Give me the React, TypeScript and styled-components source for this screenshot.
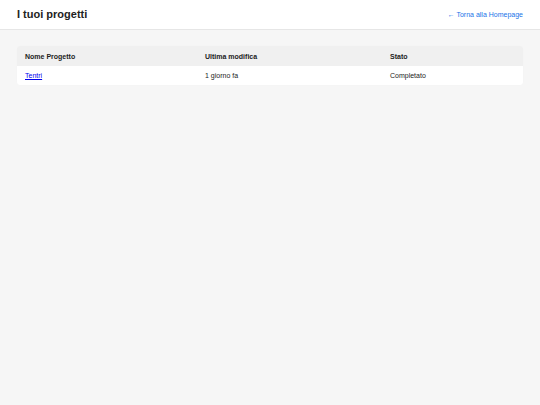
import React from "react";
import styled, { createGlobalStyle } from "styled-components";

const Global = createGlobalStyle`
  html, body { margin: 0; padding: 0; }
  body {
    background: #f6f6f6;
    font-family: "Liberation Sans", Arial, sans-serif;
    color: #222;
  }
`;

const Page = styled.div`
  min-height: 405px;
  background: #f6f6f6;
`;

const Header = styled.header`
  display: flex;
  align-items: center;
  justify-content: space-between;
  height: 30px;
  padding: 0 17px 1px;
  background: #ffffff;
  border-bottom: 1px solid #e6e6e6;
  box-sizing: border-box;
`;

const Title = styled.h1`
  margin: 0;
  font-size: 11px;
  font-weight: bold;
  color: #222;
`;

const BackLink = styled.a`
  font-size: 7px;
  color: #1a73e8;
  text-decoration: none;
`;

const Main = styled.main`
  padding: 16px 17px;
`;

const Table = styled.table`
  width: 100%;
  border-collapse: collapse;
  background: #ffffff;
  border-radius: 3px;
  overflow: hidden;
  box-shadow: 0 0 1px rgba(0, 0, 0, 0.04);
`;

const Th = styled.th<{ $w?: number }>`
  text-align: left;
  font-size: 7px;
  font-weight: bold;
  color: #222;
  background: #f0f0f0;
  height: 20px;
  padding: 0 8px;
  ${(p) => (p.$w ? `width: ${p.$w}px;` : "")}
  box-sizing: border-box;
`;

const Td = styled.td`
  font-size: 7px;
  color: #222;
  height: 19px;
  padding: 0 8px;
`;

const ProjectLink = styled.a`
  color: #0000ee;
  text-decoration: underline;
`;

export default function App() {
  return (
    <>
      <Global />
      <Page>
        <Header>
          <Title>I tuoi progetti</Title>
          <BackLink href="#">← Torna alla Homepage</BackLink>
        </Header>
        <Main>
          <Table>
            <thead>
              <tr>
                <Th $w={180}>Nome Progetto</Th>
                <Th $w={185}>Ultima modifica</Th>
                <Th>Stato</Th>
              </tr>
            </thead>
            <tbody>
              <tr>
                <Td>
                  <ProjectLink href="#">Tentri</ProjectLink>
                </Td>
                <Td>1 giorno fa</Td>
                <Td>Completato</Td>
              </tr>
            </tbody>
          </Table>
        </Main>
      </Page>
    </>
  );
}
